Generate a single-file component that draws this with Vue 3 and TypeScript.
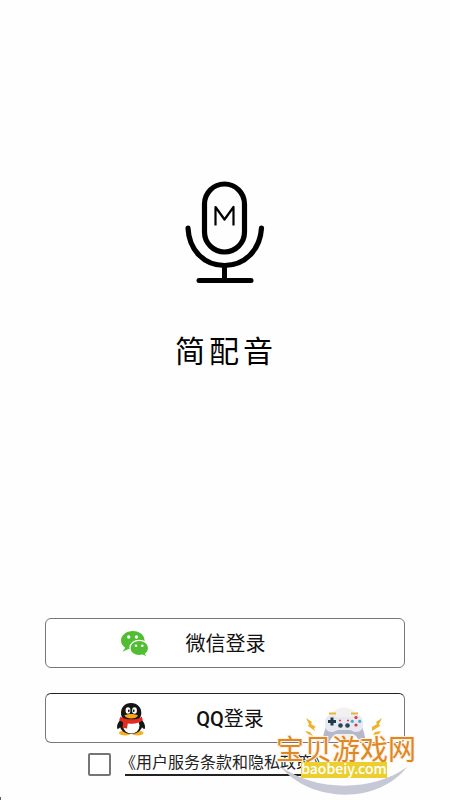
<script setup lang="ts">
import { ref } from 'vue'

const agreed = ref<boolean>(false)
</script>

<template>
  <main class="page">
    <header class="brand">
      <svg class="mic" viewBox="0 0 80 104" role="img" aria-label="M" fill="none" stroke="#000" stroke-linecap="round">
        <rect x="19.5" y="3" width="40" height="68" rx="20" stroke-width="5.2" />
        <path d="M3 47C4 69 19 84.500 39.500 84.500S75 69 76.500 47" stroke-width="5.200" />
        <path d="M39.500 85v14" stroke-width="5" />
        <path d="M14 99.500h52" stroke-width="5" />
        <path d="M30.500 44.500V26L39.500 38.500l9-12.500v18.500" stroke-width="2.200" stroke-linecap="butt" stroke-linejoin="round" />
      </svg>
      <h1 class="title">简配音</h1>
    </header>

    <section class="login">
      <button type="button" class="provider wechat">
        <svg class="icon" viewBox="0 0 30 34" aria-hidden="true">
          <path fill="#50bd32" d="M14 4C7.300 4 2 8.200 2 13.500c0 3 1.600 5.500 4.200 7.200L3.500 24.800l5.900-2.700c1.500.5 3 .8 4.600.8 6.700 0 11.500-4.200 11.500-9.400S20.700 4 14 4z" />
          <path fill="#50bd32" stroke="#fff" stroke-width="1.200" d="M20.200 13.300c-5.200 0-9.300 3.400-9.300 7.700s4.100 7.700 9.300 7.700c1.200 0 2.300-.2 3.400-.5l4.800 2-1.800-3.300c1.900-1.400 3-3.500 3-5.900 0-4.300-4.200-7.700-9.400-7.700z" />
          <g fill="#fff">
            <circle cx="9.700" cy="10" r="1.700" /><circle cx="17.400" cy="10" r="1.700" />
            <circle cx="17" cy="18.700" r="1.300" /><circle cx="23.300" cy="18.700" r="1.300" />
          </g>
        </svg>
        <span>微信登录</span>
      </button>

      <button type="button" class="provider qq">
        <svg class="icon" viewBox="0 0 30 34" aria-hidden="true">
          <ellipse cx="9" cy="31" rx="6" ry="2.600" fill="#f7b021" />
          <ellipse cx="21.500" cy="31" rx="6" ry="2.600" fill="#f7b021" />
          <path fill="#151515" d="M6 16C2.500 19 .6 23 1.100 26c.3 1.700 1.500 1 3-.7C6 30 10 32 15 32s9-2 11-6.700c1.500 1.700 2.700 2.400 3 .7.500-3-1.400-7-5-10z" />
          <ellipse cx="15.300" cy="23.500" rx="8.200" ry="8" fill="#fff" />
          <path fill="#151515" d="M15 1C8.600 1 5 5.500 5 11c0 5 3 7.800 10 7.800S25.300 16 25.300 11C25.300 5.500 21.500 1 15 1z" />
          <ellipse cx="12" cy="8.500" rx="2.400" ry="3.200" fill="#fff" />
          <ellipse cx="18.500" cy="8.500" rx="2.400" ry="3.200" fill="#fff" />
          <ellipse cx="12.800" cy="8.800" rx=".9" ry="1.400" fill="#151515" />
          <ellipse cx="17.700" cy="8.800" rx=".9" ry="1.200" fill="#151515" />
          <path fill="#e12c20" d="M4.500 14.500C8 18 22 18.500 25.800 14.500l1 3.800c-3.500 3.200-9 3.800-15 3.100L11 26.500l-4.500-.8.600-5.500-4-2z" />
          <path fill="#f7a81b" d="M8.500 13.500c3-2 10-2 13.500 0-1.500 4-12 4-13.500 0z" />
        </svg>
        <span><b>QQ</b>登录</span>
      </button>

      <div class="consent">
        <input id="agree" v-model="agreed" class="check" type="checkbox" aria-labelledby="terms" />
        <a id="terms" class="terms" href="#terms">《用户服务条款和隐私政策》</a>
      </div>
    </section>

    <svg class="watermark" viewBox="0 0 142 95" role="img" aria-label="宝贝游戏网">
      <circle cx="69" cy="19" r="16.500" fill="#f1f1f1" />
      <path fill="#c6c8d6" d="M5 61C40 87 98 87 132 62 104 99 36 99 5 61z" />
      <path fill="#b5b8c8" d="M51 22C48 29 46 40 51 39c4-1 6-9 10-10h17c4 1 6 9 10 10 4 1 2-10-1-17z" />
      <path fill="#e7e8f0" d="M57 10c-5 0-7 3-7 8 0 6 2 9 7 9 3 0 4-2 7-2h10c3 0 4 2 7 2 5 0 7-3 7-9 0-5-2-8-7-8-3 0-4 2-6 2H63c-2 0-3-2-6-2z" />
      <path d="M54 8.500h7M76 8.500h7" stroke="#edb43a" stroke-width="2" />
      <path d="M53 16.500h8M57 12.500v8" stroke="#20384a" stroke-width="3" />
      <circle cx="65.500" cy="20.500" r="2.300" fill="#294557" /><circle cx="72.500" cy="20.500" r="2.300" fill="#294557" />
      <path d="M64 15.500h2M72 15.500h2" stroke="#d9414a" stroke-width="1.500" />
      <circle cx="81" cy="12.500" r="1.600" fill="#dc3442" /><circle cx="81" cy="20" r="1.600" fill="#dc3442" />
      <circle cx="77.300" cy="16.300" r="1.600" fill="#3cacce" /><circle cx="84.700" cy="16.300" r="1.600" fill="#3cacce" />
      <g fill="#efb32b">
        <path d="M31 13l6 4-1 2 5 3-2 1 1 3-7-5 1-2zM107 13l-6 4 1 2-5 3v4l8-5-1-2zM30 26l5 1 3 4-5-2zM106 26l-6 1-2 3 6-1z" />
      </g>
      <text class="site" x="1" y="55">宝贝游戏网</text>
      <rect x="26" y="57" width="86" height="16" fill="#ebcf30" />
      <text class="domain" x="69" y="69" text-anchor="middle">baobeiy.com</text>
    </svg>
    <span class="corner" aria-hidden="true"></span>
  </main>
</template>

<style>
body {
  margin: 0;
  background: #fefefe;
}
</style>

<style scoped>
.page {
  position: relative;
  box-sizing: border-box;
  min-height: 100vh;
  padding: 181px 45px 24px;
  display: flex;
  flex-direction: column;
  font-family: Roboto, "Noto Sans CJK SC", sans-serif;
  color: #111;
}

.brand {
  display: flex;
  flex-direction: column;
  align-items: center;
  gap: 49px;
}

.mic {
  width: 80px;
  height: 104px;
}

.title {
  margin: 0;
  padding-left: 2px;
  font-size: 30px;
  line-height: 36px;
  font-weight: 400;
  letter-spacing: 4px;
  color: #000;
}

.login {
  margin-top: auto;
  display: flex;
  flex-direction: column;
}

.provider {
  box-sizing: border-box;
  width: 100%;
  height: 50px;
  margin: 0 0 25px;
  padding: 2px 0 0;
  display: flex;
  align-items: center;
  justify-content: center;
  border: 1px solid #777;
  border-radius: 6px;
  background: #fff;
  color: #111;
  font-family: inherit;
  font-size: 20px;
  line-height: 24px;
}

.wechat {
  gap: 37px;
  padding-right: 66px;
}

.qq {
  gap: 50px;
  padding-right: 70px;
  margin-bottom: 9px;
  border-top-color: #222;
}

.qq b {
  font-weight: 500;
}

.icon {
  width: 30px;
  height: 34px;
}

.consent {
  display: flex;
  align-items: center;
  gap: 14px;
  padding-left: 43px;
}

.check {
  appearance: none;
  box-sizing: border-box;
  width: 23px;
  height: 23px;
  margin: 0;
  border: 2px solid #757575;
  border-radius: 2px;
  background: #fff;
}

.check:checked {
  background: #757575;
}

.terms {
  border-bottom: 2px solid #222;
  color: #222;
  font-size: 16px;
  line-height: 22px;
  text-indent: -5px;
  text-decoration: none;
  white-space: nowrap;
}

.watermark {
  position: absolute;
  right: 33px;
  bottom: 0;
  width: 142px;
  height: 95px;
  pointer-events: none;
}

.site {
  font-family: "Noto Sans CJK SC", sans-serif;
  font-size: 28px;
  font-weight: 400;
  fill: #df8627;
  stroke: #fff3df;
  stroke-width: 2px;
  paint-order: stroke;
}

.domain {
  font-family: "Noto Sans CJK SC", sans-serif;
  font-size: 14px;
  font-weight: 500;
  fill: #fff;
}

.corner {
  position: absolute;
  left: 0;
  bottom: 0;
  width: 1px;
  height: 3px;
  background: #665c60;
}
</style>
